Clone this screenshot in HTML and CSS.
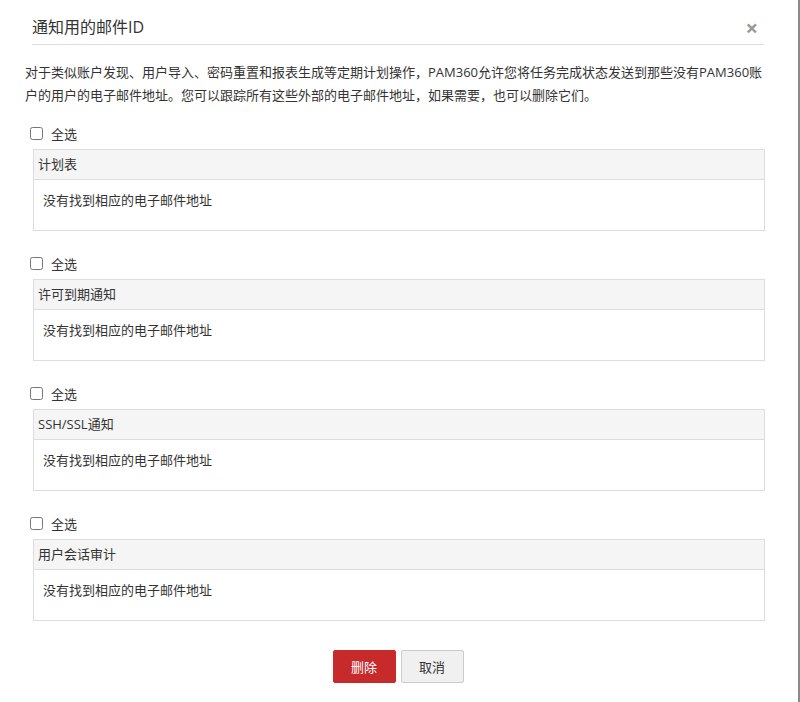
FILE: index.html
```html
<!DOCTYPE html>
<html lang="zh">
<head>
    <meta charset="UTF-8">
    <meta name="viewport" content="width=device-width, initial-scale=1.0">
    <title>通知用的邮件ID</title>
    <link rel="stylesheet" href="styles.css">
</head>
<body>
    <div class="modal">
        <div class="modal-header">
            <h3>通知用的邮件ID</h3>
            <span class="close">&times;</span>
        </div>
        <p class="desc">对于类似账户发现、用户导入、密码重置和报表生成等定期计划操作，PAM360允许您将任务完成状态发送到那些没有PAM360账户的用户的电子邮件地址。您可以跟踪所有这些外部的电子邮件地址，如果需要，也可以删除它们。</p>

        <div class="section">
            <label class="select-all"><input type="checkbox"> 全选</label>
            <div class="panel">
                <div class="panel-head">计划表</div>
                <div class="panel-body">没有找到相应的电子邮件地址</div>
            </div>
        </div>

        <div class="section">
            <label class="select-all"><input type="checkbox"> 全选</label>
            <div class="panel">
                <div class="panel-head">许可到期通知</div>
                <div class="panel-body">没有找到相应的电子邮件地址</div>
            </div>
        </div>

        <div class="section">
            <label class="select-all"><input type="checkbox"> 全选</label>
            <div class="panel">
                <div class="panel-head">SSH/SSL通知</div>
                <div class="panel-body">没有找到相应的电子邮件地址</div>
            </div>
        </div>

        <div class="section">
            <label class="select-all"><input type="checkbox"> 全选</label>
            <div class="panel">
                <div class="panel-head">用户会话审计</div>
                <div class="panel-body">没有找到相应的电子邮件地址</div>
            </div>
        </div>

        <div class="actions">
            <button class="btn btn-delete">删除</button>
            <button class="btn btn-cancel">取消</button>
        </div>
    </div>
</body>
</html>
```

FILE: styles.css
```css
body {
    margin: 0;
    background-color: #8a8a8a;
    font-family: "Open Sans", "Noto Sans CJK SC", sans-serif;
    color: #333;
    font-size: 13px;
}

.modal {
    width: 798px;
    height: 702px;
    background-color: #fff;
    overflow: hidden;
}

.modal-header {
    display: flex;
    align-items: center;
    justify-content: space-between;
    margin: 0 34px 0 32px;
    padding: 16px 0 6px;
    border-bottom: 1px solid #ddd;
}

.modal-header h3 {
    margin: 0;
    font-size: 16px;
    font-weight: normal;
    line-height: 22px;
}

.close {
    color: #999;
    font-size: 22px;
    font-weight: bold;
    line-height: 22px;
    margin-right: 6px;
    cursor: pointer;
}

.desc {
    margin: 16px 28px 0 25px;
    line-height: 23px;
}

.section {
    margin: 16px 33px 0 30px;
}

.section + .section {
    margin-top: 22px;
}

.select-all {
    display: flex;
    align-items: center;
    height: 20px;
    gap: 8px;
}

.select-all input {
    width: 13px;
    height: 13px;
    margin: 0;
}

.panel {
    margin: 6px 0 0 3px;
    border: 1px solid #ddd;
}

.panel-head {
    background-color: #f5f5f5;
    border-bottom: 1px solid #ddd;
    height: 29px;
    line-height: 29px;
    padding-left: 4px;
}

.panel-body {
    height: 50px;
    padding: 10px 9px 0;
    box-sizing: border-box;
    line-height: 20px;
}

.actions {
    display: flex;
    justify-content: center;
    gap: 5px;
    margin-top: 29px;
    padding-right: 2px;
}

.btn {
    width: 63px;
    height: 33px;
    font-family: inherit;
    font-size: 13px;
    border-radius: 2px;
    cursor: pointer;
}

.btn-delete {
    background-color: #c62a2a;
    border: 1px solid #c62a2a;
    color: #fff;
}

.btn-cancel {
    background-color: #f0f0f0;
    border: 1px solid #ccc;
    color: #333;
}
```
